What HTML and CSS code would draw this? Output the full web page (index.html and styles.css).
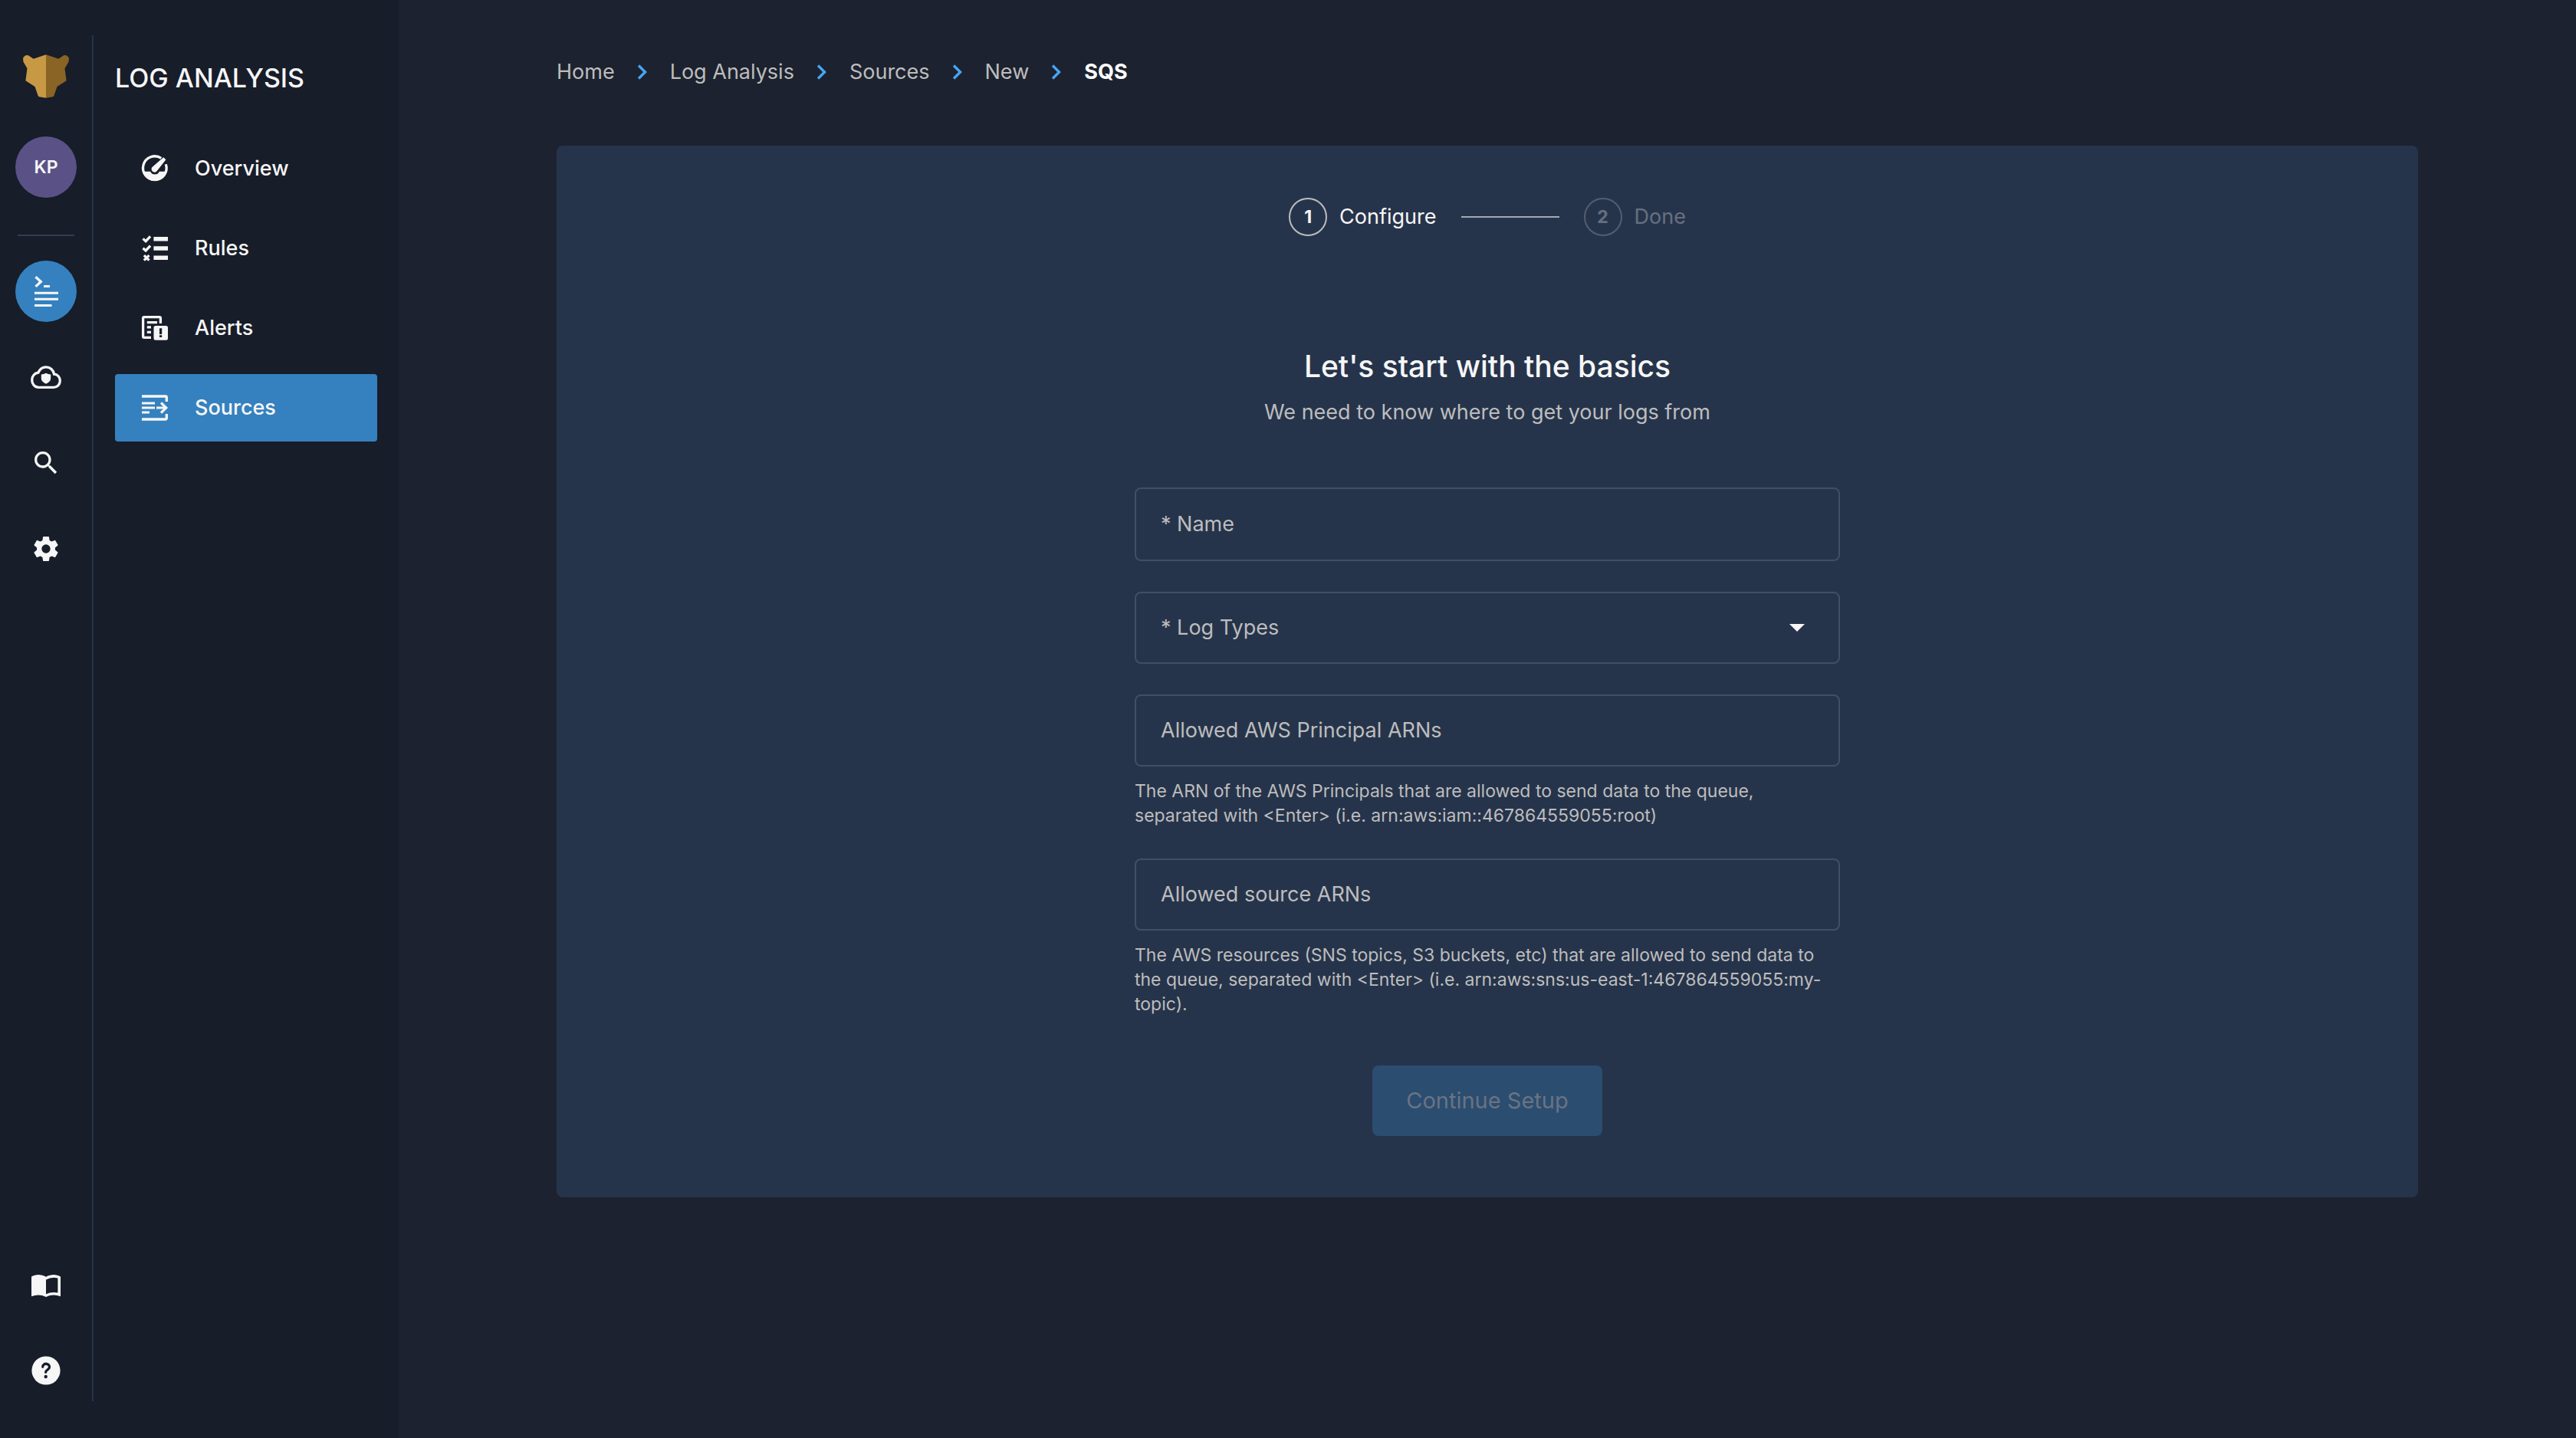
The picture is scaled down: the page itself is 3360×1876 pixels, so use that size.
FILE: index.html
```html
<!DOCTYPE html>
<html lang="en">
<head>
  <meta charset="utf-8">
  <meta name="viewport" content="width=device-width, initial-scale=1">
  <title>New SQS Source</title>
  <link rel="stylesheet" href="styles.css">
</head>
<body>
  <div class="app">
    <aside class="sidebar">
      <nav class="rail" aria-label="Primary">
        <a class="logo" href="#" aria-label="Home">
          <svg width="60" height="58" viewBox="0 0 60 58" aria-hidden="true">
            <path fill="#c89944" d="M30 .3 13.7 5.7 7 1.3Q5.500 .6 3.500 1.300L1.200 2.900Q0 4 .1 5.500L.4 9.500 5.500 18.300 3.400 34.300 15.500 42 19.700 54Q20 55 21 55.300L30 56.700z"/>
            <path fill="#8a6424" d="M30 .3 46.300 5.700 53 1.300Q54.500 .6 56.500 1.300L58.800 2.900Q60 4 59.900 5.500L59.600 9.500 54.500 18.300 56.600 34.300 44.500 42 40.300 54Q40 55 39 55.300L30 56.700z"/>
          </svg>
        </a>
        <button class="avatar" type="button">KP</button>
        <hr class="rail-divider">
        <div class="rail-group">
          <a class="rail-link rail-link-active" href="#" aria-label="Log Analysis">
            <svg class="icon" viewBox="0 0 40 40" aria-hidden="true">
              <path class="line" d="M6.500 1.200 13.300 7.500 6.500 13.900"/>
              <path d="M17 12h8v3h-8zM5 20.700h31v3H5zM5 28.700h31v3H5zM5 37h22.500v3H5z"/>
            </svg>
          </a>
          <a class="rail-link" href="#" aria-label="Cloud Security">
            <svg class="icon" viewBox="0 0 40 40" aria-hidden="true">
              <path class="line" d="M10.500 33.300C5.500 33.300 1.700 29.300 1.700 24 1.700 18.500 5 14.800 10 14 12 9.500 15.600 6.900 20 6.900c5.500 0 9.700 3.900 10.600 9.300 4.400.2 7.700 3.800 7.700 8.500 0 4.900-3.600 8.600-8.300 8.600z"/>
              <path d="M20 14.800q3 1.600 6.200 1.600v5.400q0 4.200-6.200 6.900-6.200-2.700-6.200-6.900v-5.400q3.200 0 6.200-1.600z"/>
            </svg>
          </a>
          <a class="rail-link" href="#" aria-label="Search">
            <svg class="icon" viewBox="0 0 24 24" aria-hidden="true">
              <path d="M15.500 14h-.79l-.28-.27C15.410 12.590 16 11.110 16 9.500 16 5.910 13.090 3 9.500 3S3 5.910 3 9.500 5.910 16 9.500 16c1.610 0 3.090-.59 4.230-1.570l.27.28v.79l5 4.990L20.490 19l-4.990-5zm-6 0C7.010 14 5 11.990 5 9.500S7.010 5 9.500 5 14 7.010 14 9.500 11.990 14 9.500 14z"/>
            </svg>
          </a>
          <a class="rail-link" href="#" aria-label="Settings">
            <svg class="icon" viewBox="0 0 24 24" aria-hidden="true">
              <path fill-rule="evenodd" d="M19.140 12.940c.04-.3.06-.61.06-.94 0-.32-.02-.64-.07-.94l2.030-1.580c.18-.14.23-.41.12-.61l-1.920-3.320c-.12-.22-.37-.29-.59-.22l-2.390.96c-.5-.38-1.030-.7-1.620-.94l-.36-2.540c-.04-.24-.24-.41-.48-.41h-3.840c-.24 0-.43.17-.47.41l-.36 2.540c-.59.24-1.130.57-1.620.94l-2.390-.96c-.22-.08-.47 0-.59.22L2.740 8.870c-.12.21-.08.47.12.61l2.030 1.580c-.05.3-.09.63-.09.94s.02.64.07.94l-2.030 1.580c-.18.14-.23.41-.12.61l1.920 3.320c.12.22.37.29.59.22l2.390-.96c.5.38 1.030.7 1.620.94l.36 2.540c.05.24.24.41.48.41h3.840c.24 0 .44-.17.47-.41l.36-2.540c.59-.24 1.130-.56 1.620-.94l2.390.96c.22.08.47 0 .59-.22l1.920-3.320c.12-.22.07-.47-.12-.61l-2.010-1.580zM12 15.400a3.400 3.400 0 1 1 0-6.800 3.400 3.400 0 0 1 0 6.800z"/>
            </svg>
          </a>
        </div>
        <div class="rail-group rail-group-end">
          <a class="rail-link" href="#" aria-label="Documentation">
            <svg class="icon" viewBox="0 0 40 40" aria-hidden="true">
              <path fill-rule="evenodd" d="M1 9.500C6 6 14 6 20 9.700 26 6 34 6 39 9.500V35.200Q29 31.500 20 36 11 31.500 1 35.200zM20 13.400V32.200Q27 28.800 35.400 30.400V11.400Q27 9.600 20 13.400z"/>
            </svg>
          </a>
          <a class="rail-link" href="#" aria-label="Help">
            <svg class="icon" viewBox="0 0 40 40" aria-hidden="true">
              <circle cx="20" cy="20" r="18.600"/>
              <path class="cut" d="M15.700 15.200c0-5.400 8.800-5.200 8.800.2 0 3.300-4.900 3.800-4.900 6.800"/>
              <circle class="cut-dot" cx="19.700" cy="28" r="2.200"/>
            </svg>
          </a>
        </div>
      </nav>
      <nav class="menu" aria-labelledby="menu-title">
        <h2 class="menu-title" id="menu-title">LOG ANALYSIS</h2>
        <ul class="menu-list">
          <li>
            <a class="menu-link" href="#">
              <svg class="icon" viewBox="0 0 40 40" aria-hidden="true">
                <path class="line" d="M34.300 14.200A15.300 15.300 0 1 1 28.300 6.400"/>
                <path d="M4 23.700h10.200a6.300 6.300 0 0 0 11.600 0H36A16.500 16.500 0 0 1 4 23.700zM31.200 5.200l3.200 3.100L23 22.700a4 4 0 1 1-5.600-5.400z"/>
              </svg>
              Overview
            </a>
          </li>
          <li>
            <a class="menu-link" href="#">
              <svg class="icon" viewBox="0 0 40 40" aria-hidden="true">
                <path class="line" d="M4.500 7.400l3.600 3.300 6-6.400M4.500 19.700l3.600 3.300 6-6.400M5.900 29.100l6.600 6.600M12.500 29.100l-6.600 6.600"/>
                <path d="M18.400 5H37v5.400H18.400zM18.400 17.300H37v5.400H18.400zM18.400 29.600H37V35H18.400z"/>
              </svg>
              Rules
            </a>
          </li>
          <li>
            <a class="menu-link" href="#">
              <svg class="icon" viewBox="0 0 40 40" aria-hidden="true">
                <path class="line" d="M27.400 14V7q0-1.400-1.400-1.400H6Q4.600 5.600 4.600 7v24q0 1.400 1.400 1.400h9"/>
                <path fill-rule="evenodd" d="M9.800 11H23v3.200H9.800zM9.800 17.300H15v3.200H9.800zM9.800 23.800H15V27H9.800zM21 17h13.500q2.500 0 2.500 2.500v13.700q0 2.500-2.500 2.500H21q-2.500 0-2.500-2.500V19.500Q18.500 17 21 17zM26 20.300V28h3.200v-7.700zM26 29.300V32h3.200v-2.700z"/>
              </svg>
              Alerts
            </a>
          </li>
          <li>
            <a class="menu-link menu-link-active" href="#" aria-current="page">
              <svg class="icon" viewBox="0 0 40 40" aria-hidden="true">
                <path class="line" d="M3 5h30.900q1.400 0 1.400 1.400V12M3 35h30.900q1.400 0 1.400-1.400V28M28 13.300 34.700 20 28 26.700"/>
                <path d="M3 12.400h17v3.200H3zM3 18.400h17v3.200H3zM3 24.400h10v3.200H3zM22 18.400h12v3.200H22z"/>
              </svg>
              Sources
            </a>
          </li>
        </ul>
      </nav>
    </aside>

    <main class="main">
      <nav aria-label="Breadcrumb">
        <ol class="breadcrumbs">
          <li><a href="#">Home</a></li>
          <li><svg class="chevron" viewBox="0 0 14 20" aria-hidden="true"><path d="M2 1.500 10.500 10 2 18.500"/></svg><a href="#">Log Analysis</a></li>
          <li><svg class="chevron" viewBox="0 0 14 20" aria-hidden="true"><path d="M2 1.500 10.500 10 2 18.500"/></svg><a href="#">Sources</a></li>
          <li><svg class="chevron" viewBox="0 0 14 20" aria-hidden="true"><path d="M2 1.500 10.500 10 2 18.500"/></svg><a href="#">New</a></li>
          <li><svg class="chevron" viewBox="0 0 14 20" aria-hidden="true"><path d="M2 1.500 10.500 10 2 18.500"/></svg><a class="current" href="#" aria-current="page">SQS</a></li>
        </ol>
      </nav>

      <section class="card">
        <ol class="stepper">
          <li class="step" aria-current="step"><span class="step-number">1</span>Configure</li>
          <li class="step-line" aria-hidden="true"></li>
          <li class="step step-pending"><span class="step-number">2</span>Done</li>
        </ol>

        <header class="intro">
          <h1>Let's start with the basics</h1>
          <p>We need to know where to get your logs from</p>
        </header>

        <form class="form">
          <div class="field field-name">
            <input id="name" type="text" required>
            <label for="name">* Name</label>
          </div>
          <div class="field">
            <select id="log-types" required>
              <option value="" selected></option>
            </select>
            <label for="log-types">* Log Types</label>
            <svg class="caret" width="20" height="10" viewBox="0 0 20 10" aria-hidden="true"><path d="M0 0h20L10 10z"/></svg>
          </div>
          <div>
            <div class="field">
              <input id="principals" type="text" aria-describedby="principals-help">
              <label for="principals">Allowed AWS Principal ARNs</label>
            </div>
            <p class="help" id="principals-help">The ARN of the AWS Principals that are allowed to send data to the queue, separated with &lt;Enter&gt; (i.e. arn:aws:iam::467864559055:root)</p>
          </div>
          <div>
            <div class="field">
              <input id="sources" type="text" aria-describedby="sources-help">
              <label for="sources">Allowed source ARNs</label>
            </div>
            <p class="help" id="sources-help">The AWS resources (SNS topics, S3 buckets, etc) that are allowed to send data to the queue, separated with &lt;Enter&gt; (i.e. arn:aws:sns:us-east-1:467864559055:my-topic).</p>
          </div>
          <button class="submit" type="submit" disabled>Continue Setup</button>
        </form>
      </section>
    </main>
  </div>
</body>
</html>
```

FILE: styles.css
```css
:root {
  --page: #1c222f;
  --sidebar: #171d29;
  --surface: #26344b;
  --outline: #404e68;
  --accent: #3581bf;
  --text: #f6f6f6;
  --muted: #bdbdbd;
}

* {
  box-sizing: border-box;
}

body {
  margin: 0;
  background: var(--page);
  color: var(--text);
  font: 400 27px/40px Inter, "Liberation Sans", sans-serif;
}

h1,
h2,
p,
ul,
ol {
  margin: 0;
  padding: 0;
}

ul,
ol {
  list-style: none;
}

a {
  color: inherit;
  text-decoration: none;
}

button,
input,
select {
  font: inherit;
  color: inherit;
}

.app {
  display: flex;
  min-height: 100vh;
}

/* Sidebar */

.sidebar {
  display: flex;
  flex: none;
  width: 520px;
  padding: 46px 0 48px;
  background: var(--sidebar);
}

.rail {
  display: flex;
  flex-direction: column;
  align-items: center;
  width: 122px;
  border-right: 2px solid var(--surface);
}

.logo {
  display: flex;
  margin: 25px 0 49px;
}

.avatar {
  width: 80px;
  height: 80px;
  padding: 0;
  border: 0;
  border-radius: 50%;
  background: #5a5286;
  font-size: 23px;
  font-weight: 600;
}

.rail-divider {
  width: 74px;
  height: 2px;
  margin: 48px 0 32px;
  border: 0;
  background: #323d50;
}

.rail-group {
  display: flex;
  flex-direction: column;
  gap: 32px;
}

.rail-group-end {
  margin-top: auto;
}

.rail-link {
  display: grid;
  place-items: center;
  width: 80px;
  height: 80px;
  border-radius: 50%;
}

.rail-link-active {
  background: var(--accent);
}

.icon {
  display: block;
  flex: none;
  width: 40px;
  height: 40px;
  fill: var(--text);
}

.icon .line {
  fill: none;
  stroke: var(--text);
  stroke-width: 3.3;
}

.icon .cut {
  fill: none;
  stroke: var(--sidebar);
  stroke-width: 3.3;
  stroke-linecap: round;
}

.icon .cut-dot {
  fill: var(--sidebar);
}

.menu {
  flex: 1;
  padding: 34px 28px 0;
}

.menu-title {
  margin-bottom: 52px;
  font-size: 34px;
  font-weight: 500;
  line-height: 44px;
}

.menu-list {
  display: grid;
  gap: 16px;
}

.menu-link {
  display: flex;
  align-items: center;
  gap: 32px;
  height: 88px;
  padding: 0 32px;
  border-radius: 4px;
  font-weight: 500;
}

.menu-link-active {
  background: var(--accent);
}

/* Main column */

.main {
  flex: 1;
  min-width: 0;
  padding: 74px 206px;
}

.breadcrumbs {
  display: flex;
  margin-bottom: 76px;
  color: var(--muted);
}

.breadcrumbs li {
  display: flex;
  align-items: center;
}

.chevron {
  width: 14px;
  height: 20px;
  margin: 0 29px;
  fill: none;
  stroke: #48a5f3;
  stroke-width: 3.4;
}

.breadcrumbs .current {
  color: #fff;
  font-weight: 700;
}

.card {
  padding: 68px 48px 80px;
  border-radius: 8px;
  background: var(--surface);
}

.stepper {
  display: flex;
  align-items: center;
  justify-content: center;
  gap: 32px;
}

.step {
  display: flex;
  align-items: center;
  gap: 16px;
}

.step-number {
  display: grid;
  place-items: center;
  width: 50px;
  height: 50px;
  border: 2px solid var(--muted);
  border-radius: 50%;
  font-size: 23px;
  font-weight: 700;
}

.step-pending {
  opacity: 0.3;
}

.step-line {
  width: 128px;
  height: 2px;
  background: #a3a9b3;
}

.intro {
  margin: 144px 0 78px;
  text-align: center;
}

.intro h1 {
  margin-bottom: 14px;
  font-size: 39px;
  font-weight: 500;
  line-height: 52px;
}

.intro p {
  color: var(--muted);
}

.form {
  display: grid;
  gap: 40px;
  max-width: 920px;
  margin: 0 auto;
}

.field {
  display: grid;
  grid-template-columns: minmax(0, 1fr);
  align-items: center;
  height: 94px;
}

.field-name {
  height: 96px;
}

.field > * {
  grid-area: 1 / 1;
}

.field input,
.field select {
  width: 100%;
  height: 100%;
  padding: 0 34px;
  border: 2px solid var(--outline);
  border-radius: 8px;
  background: transparent;
  appearance: none;
}

.field label {
  justify-self: start;
  padding-left: 34px;
  color: var(--muted);
  pointer-events: none;
}

.caret {
  justify-self: end;
  margin-right: 46px;
  fill: var(--text);
  pointer-events: none;
}

.help {
  padding-top: 16px;
  color: var(--muted);
  font-size: 23px;
  line-height: 32px;
}

.submit {
  justify-self: center;
  width: 300px;
  height: 92px;
  margin-top: 24px;
  border: 0;
  border-radius: 8px;
  background: #2b4d70;
  color: #6a7383;
  font-size: 29px;
}
```
